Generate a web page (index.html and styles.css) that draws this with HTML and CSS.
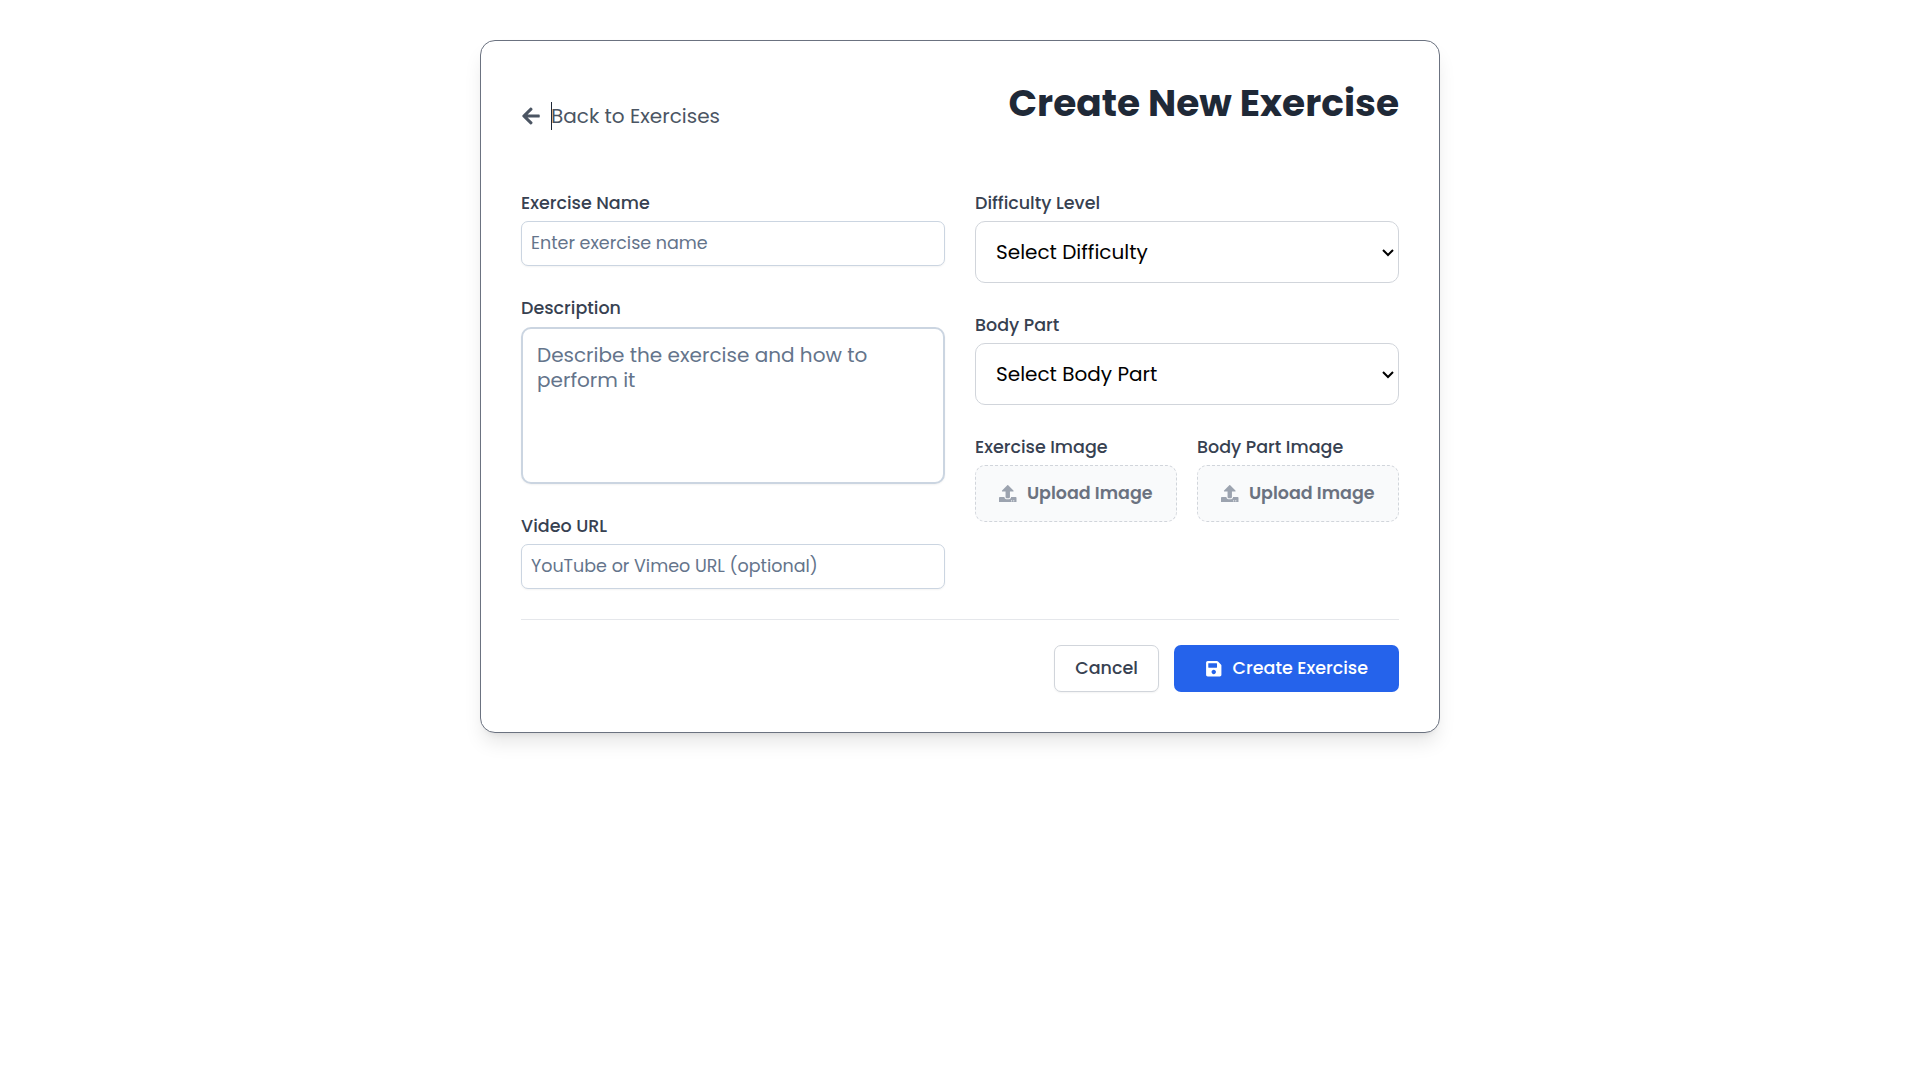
FILE: index.html
```html
<!DOCTYPE html>
<html lang="en">
<head>
<meta charset="utf-8">
<title>Create New Exercise</title>
<link rel="stylesheet" href="styles.css">
</head>
<body>
<main class="card">
  <header class="card-header">
    <a class="back">
      <svg class="back-icon" viewBox="0 0 448 512"><path fill="currentColor" d="M257.500 445.100l-22.200 22.200c-9.400 9.400-24.600 9.400-33.900 0L7 273c-9.400-9.400-9.400-24.600 0-33.900L201.400 44.700c9.400-9.400 24.600-9.400 33.900 0l22.200 22.200c9.500 9.500 9.300 25-.4 34.300L136.600 216H424c13.300 0 24 10.700 24 24v32c0 13.300-10.700 24-24 24H136.600l120.500 114.800c9.800 9.300 10 24.800.4 34.300z"/></svg>
      <span class="back-text">Back to Exercises</span>
    </a>
    <h1 class="title">Create New Exercise</h1>
  </header>
  <form>
    <div class="columns">
      <div class="column">
        <div class="field">
          <label class="label">Exercise Name</label>
          <input class="input" type="text" placeholder="Enter exercise name">
        </div>
        <div class="field">
          <label class="label label-description">Description</label>
          <textarea class="textarea" placeholder="Describe the exercise and how to perform it"></textarea>
        </div>
        <div class="field">
          <label class="label">Video URL</label>
          <input class="input" type="text" placeholder="YouTube or Vimeo URL (optional)">
        </div>
      </div>
      <div class="column">
        <div class="field">
          <label class="label">Difficulty Level</label>
          <select class="select"><option>Select Difficulty</option></select>
        </div>
        <div class="field">
          <label class="label">Body Part</label>
          <select class="select"><option>Select Body Part</option></select>
        </div>
        <div class="uploads">
          <div class="field">
            <label class="label">Exercise Image</label>
            <div class="upload">
              <svg class="upload-icon" viewBox="0 0 512 512"><path fill="currentColor" d="M296 384h-80c-13.300 0-24-10.700-24-24V192h-87.700c-17.800 0-26.700-21.500-14.100-34.100L242.300 5.700c7.500-7.500 19.800-7.500 27.300 0l152.200 152.200c12.600 12.600 3.700 34.100-14.100 34.100H320v168c0 13.300-10.700 24-24 24zm216-8v112c0 13.300-10.700 24-24 24H24c-13.300 0-24-10.700-24-24V376c0-13.300 10.700-24 24-24h136v8c0 30.900 25.100 56 56 56h80c30.900 0 56-25.100 56-56v-8h136c13.300 0 24 10.700 24 24zm-124 88c0-11-9-20-20-20s-20 9-20 20 9 20 20 20 20-9 20-20zm64 0c0-11-9-20-20-20s-20 9-20 20 9 20 20 20 20-9 20-20z"/></svg>
              <span class="upload-text">Upload Image</span>
            </div>
          </div>
          <div class="field">
            <label class="label">Body Part Image</label>
            <div class="upload">
              <svg class="upload-icon" viewBox="0 0 512 512"><path fill="currentColor" d="M296 384h-80c-13.300 0-24-10.700-24-24V192h-87.700c-17.800 0-26.700-21.500-14.100-34.100L242.300 5.700c7.500-7.500 19.800-7.500 27.300 0l152.200 152.200c12.600 12.600 3.700 34.100-14.100 34.100H320v168c0 13.300-10.700 24-24 24zm216-8v112c0 13.300-10.700 24-24 24H24c-13.300 0-24-10.700-24-24V376c0-13.300 10.700-24 24-24h136v8c0 30.900 25.100 56 56 56h80c30.900 0 56-25.100 56-56v-8h136c13.300 0 24 10.700 24 24zm-124 88c0-11-9-20-20-20s-20 9-20 20 9 20 20 20 20-9 20-20zm64 0c0-11-9-20-20-20s-20 9-20 20 9 20 20 20 20-9 20-20z"/></svg>
              <span class="upload-text">Upload Image</span>
            </div>
          </div>
        </div>
      </div>
    </div>
    <footer class="actions">
      <button class="button cancel" type="button">Cancel</button>
      <button class="button create" type="button">
        <svg class="save-icon" viewBox="0 0 448 512"><path fill="currentColor" d="M433.900 129.900l-83.900-83.900A48 48 0 0 0 316.100 32H48C21.500 32 0 53.500 0 80v352c0 26.500 21.500 48 48 48h352c26.500 0 48-21.500 48-48V163.900a48 48 0 0 0-14.100-34zM224 416c-35.300 0-64-28.700-64-64 0-35.300 28.700-64 64-64s64 28.700 64 64c0 35.300-28.700 64-64 64zm96-304.500V212c0 6.600-5.400 12-12 12H76c-6.600 0-12-5.400-12-12V108c0-6.600 5.400-12 12-12h228.500c3.200 0 6.200 1.300 8.500 3.500l3.500 3.500A12 12 0 0 1 320 111.500z"/></svg>
        <span>Create Exercise</span>
      </button>
    </footer>
  </form>
</main>
</body>
</html>
```

FILE: styles.css
```css
* { box-sizing: border-box; }
body {
  margin: 0;
  min-height: 100vh;
  padding: 40px 0 0 1px;
  background: #fff;
  font-family: Poppins, Inter, sans-serif;
}
input, select, textarea, button { font-family: inherit; margin: 0; }

.card {
  width: 960px;
  margin: 0 auto;
  padding: 40px;
  border: 1px solid #6b7280;
  border-radius: 15px;
  background: #fff;
  box-shadow: 0 12.5px 18.75px -3.75px rgba(0, 0, 0, .1), 0 5px 7.5px -5px rgba(0, 0, 0, .1);
}

.card-header {
  display: flex;
  justify-content: space-between;
  height: 110px;
}
.back {
  display: flex;
  align-items: center;
  gap: 11px;
  height: 70px;
  color: #4b5563;
  font-size: 20px;
}
.back-icon { width: 20px; height: 20px; }
.back-text {
  height: 28px;
  line-height: 28px;
  margin-left: -1px;
  box-shadow: inset 1px 0 0 #1f2937;
}
.title {
  margin: 0;
  font-size: 37.5px;
  line-height: 44px;
  font-weight: 700;
  color: #1f2937;
}

.columns {
  display: grid;
  grid-template-columns: 1fr 1fr;
  gap: 30px;
}
.column { display: flex; flex-direction: column; gap: 30px; }
.field { display: flex; flex-direction: column; }
.label {
  height: 25px;
  margin-bottom: 5px;
  line-height: 25px;
  font-size: 17.5px;
  font-weight: 500;
  color: #374151;
}
.label-description { margin-bottom: 6px; }

.input {
  height: 45px;
  padding: 0 9px 1px;
  border: 1px solid #cbd5e1;
  border-radius: 7px;
  background: #fff;
  font-size: 17.5px;
  box-shadow: 0 1px 2px rgba(0, 0, 0, .05);
}
.input::placeholder, .textarea::placeholder { color: #64748b; opacity: 1; }
.textarea {
  display: block;
  height: 157px;
  padding: 14px 14px 12px;
  border: 2px solid #cbd5e1;
  border-radius: 10px;
  resize: none;
  font-size: 20px;
  line-height: 25px;
  box-shadow: 0 1px 2px rgba(0, 0, 0, .05);
}
/* Sizes are in 16px-root units; zoom also enlarges the native arrow. */
.select {
  zoom: 1.25;
  height: 49.6px;
  padding: 0 0 0 12px;
  border: .8px solid #d1d5db;
  border-radius: 8px;
  background: #fff;
  color: #000;
  font-size: 16px;
}
.uploads {
  display: grid;
  grid-template-columns: 1fr 1fr;
  gap: 20px;
}
.upload {
  display: flex;
  align-items: center;
  justify-content: center;
  gap: 10px;
  height: 57px;
  border: 1px dashed #d1d5db;
  border-radius: 10px;
  background: #f9fafb;
  color: #6b7280;
  font-size: 17.5px;
  font-weight: 600;
}
.upload-icon { width: 17.5px; height: 17.5px; color: #9ca3af; }
.upload-text { line-height: 25px; padding-bottom: 1px; }

.actions {
  display: flex;
  justify-content: flex-end;
  gap: 15px;
  margin-top: 30px;
  padding-top: 25px;
  border-top: 1px solid #e5e7eb;
}
.button {
  display: flex;
  align-items: center;
  justify-content: center;
  height: 47px;
  padding: 0;
  border-radius: 7px;
  font-size: 17.5px;
  font-weight: 500;
  line-height: 25px;
}
.cancel {
  width: 105px;
  border: 1px solid #d1d5db;
  background: #fff;
  color: #374151;
  box-shadow: 0 1px 2px rgba(0, 0, 0, .05);
}
.create {
  width: 225px;
  gap: 10px;
  border: 0;
  background: #2563eb;
  color: #fff;
}
.save-icon { width: 17.5px; height: 17.5px; }
```
